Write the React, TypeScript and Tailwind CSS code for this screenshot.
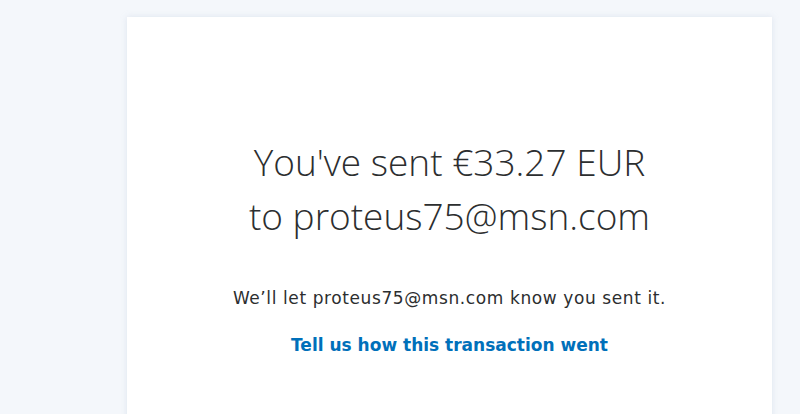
export default function App() {
  return (
    <div className="h-[414px] w-[800px] bg-[#f4f7fb] pt-[17px] pl-[127px] overflow-hidden">
      <div className="w-[645px] h-[420px] bg-white shadow-[0_0_6px_rgba(180,195,215,0.35)] pt-[118px] flex flex-col items-center">
        <h1 className="text-[37px] leading-[54px] text-[#2c2e2f] text-center font-light font-['Open_Sans',sans-serif]">
          You've sent €33.27 EUR
          <br />
          to proteus75@msn.com
        </h1>
        <p className="mt-[43px] text-[17px] leading-[24px] tracking-[0.6px] text-[#2c2e2f] font-['DejaVu_Sans',sans-serif]">
          We’ll let proteus75@msn.com know you sent it.
        </p>
        <a
          href="#"
          className="mt-[23px] text-[17px] leading-[24px] font-bold text-[#0070ba] font-['DejaVu_Sans',sans-serif]"
        >
          Tell us how this transaction went
        </a>
      </div>
    </div>
  );
}
